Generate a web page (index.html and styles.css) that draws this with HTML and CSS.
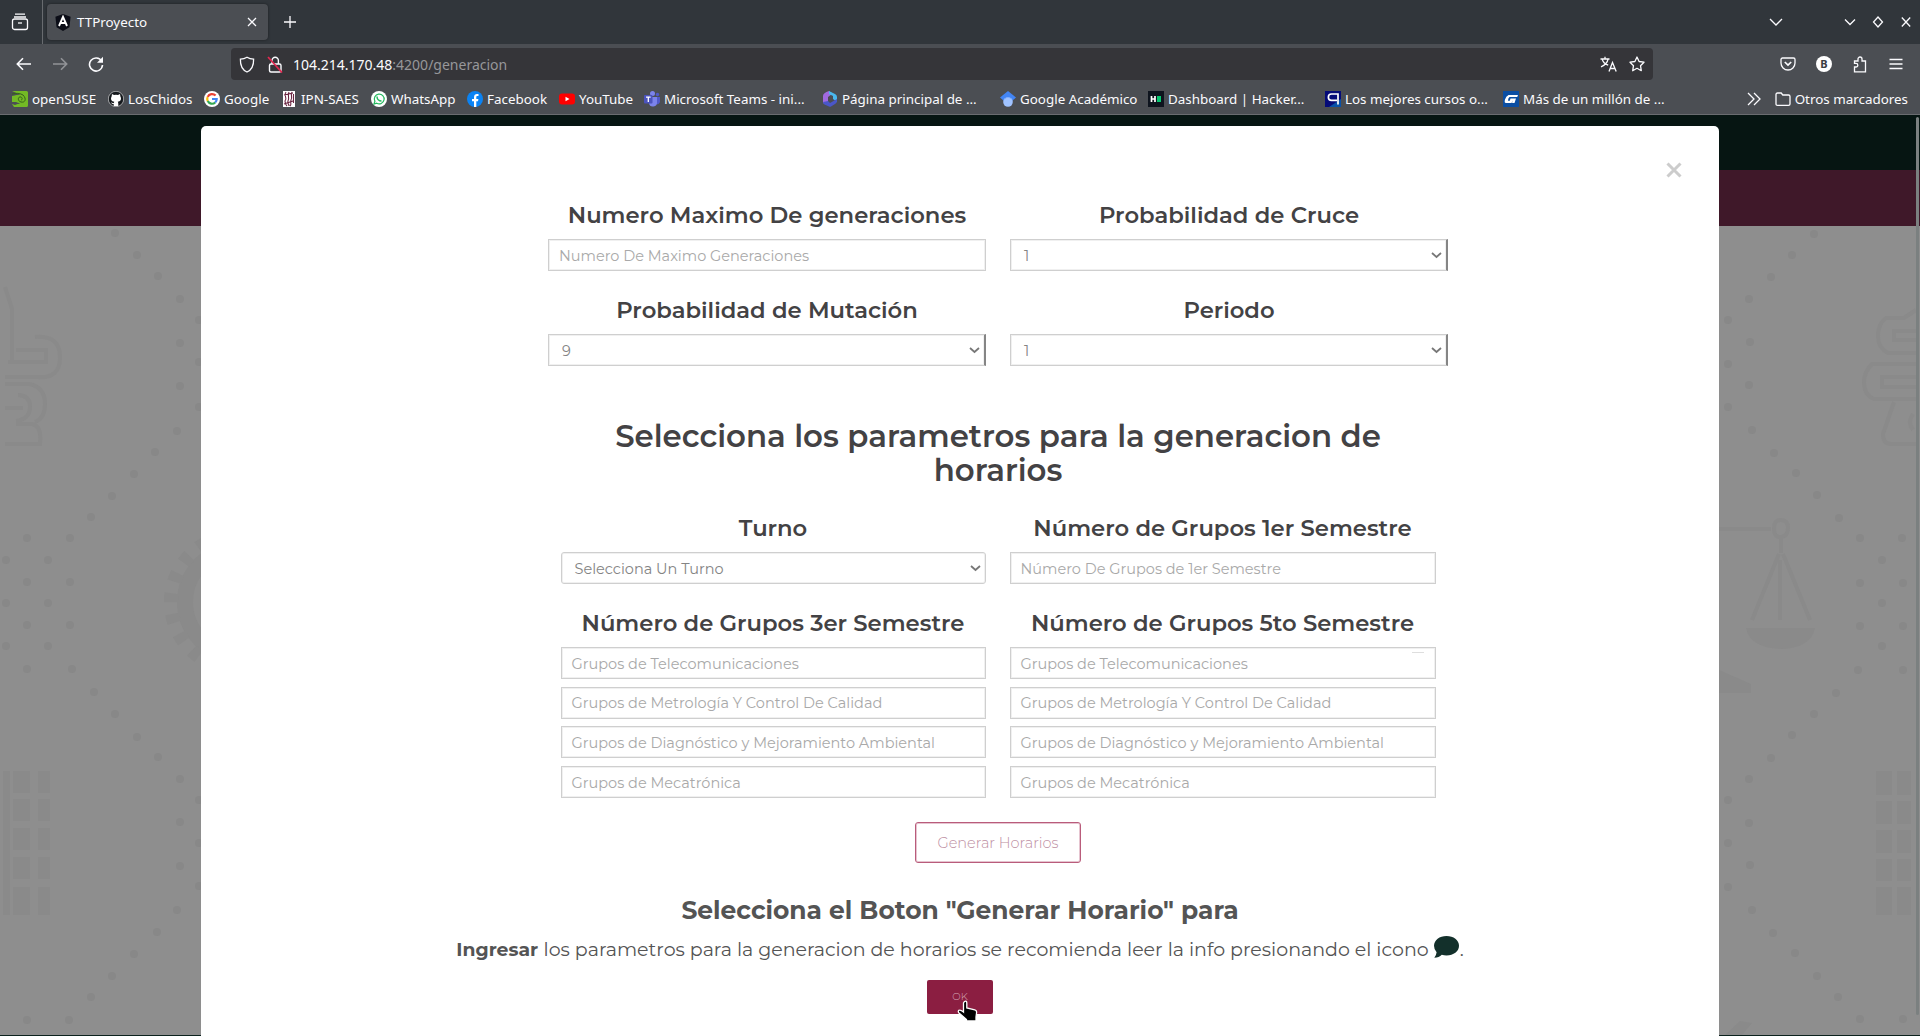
FILE: index.html
```html
<!DOCTYPE html>
<html lang="es">
<head>
<meta charset="utf-8">
<title>TTProyecto</title>
<link rel="stylesheet" href="styles.css">
</head>
<body>
<div class="window">
  <header class="tabs">
    <div class="tabs-view"><svg width="18" height="18" viewBox="0 0 18 18" class="line"><path d="M4 1.2h10M3 4h12"/><rect x="1.5" y="6" width="15" height="10.5" rx="2"/><path d="M7 10h4"/></svg></div>
    <div class="tab">
      <svg width="16" height="17" viewBox="0 0 16 17"><path fill="#0b0d17" d="M8 0l7.6 2.7-1.2 10.6L8 17l-6.4-3.7L.4 2.7z"/><path fill="none" stroke="#fff" stroke-width="1.9" d="M4 12L8 2.8 12 12M5.6 9h4.8"/></svg>
      <span class="tab-name">TTProyecto</span>
      <svg width="10" height="10" viewBox="0 0 10 10" class="line"><path d="M1 1l8 8M9 1l-8 8"/></svg>
    </div>
    <svg class="plus line" width="14" height="14" viewBox="0 0 14 14"><path d="M7 1v12M1 7h12"/></svg>
    <div class="tabs-right">
      <svg class="line list-tabs" width="14" height="10" viewBox="0 0 14 10"><path d="M1 2l6 6 6-6"/></svg>
      <svg class="line" width="12" height="10" viewBox="0 0 12 10"><path d="M1 2.5l5 5 5-5"/></svg>
      <svg class="line" width="12" height="12" viewBox="0 0 12 12"><path d="M6 1l4.500 5L6 11 1.500 6z"/></svg>
      <svg class="line" width="12" height="12" viewBox="0 0 12 12"><path d="M1.800 1.500l8.400 9M10.200 1.500l-8.400 9"/></svg>
    </div>
  </header>

  <nav class="toolbar">
    <div class="nav-buttons">
      <svg width="16" height="14" viewBox="0 0 16 14" class="bold-line"><path d="M15 7H1.500M7 1.200L1.300 7 7 12.800"/></svg>
      <svg width="16" height="14" viewBox="0 0 16 14" class="bold-line dim"><path d="M1 7h13.500M9 1.200L14.700 7 9 12.800"/></svg>
      <svg width="16" height="16" viewBox="0 0 16 16" class="bold-line"><path d="M13.600 5.200A6.500 6.500 0 1 0 14.500 9"/><path fill="#fbfbfe" stroke="none" d="M15 .8v6H9z"/></svg>
    </div>
    <div class="address">
      <svg width="16" height="17" viewBox="0 0 16 17" class="line"><path d="M8 1.200c2 1.300 4.200 1.900 6.600 2C14.800 9.500 12.300 14 8 16 3.700 14 1.200 9.500 1.400 3.200 3.800 3.100 6 2.500 8 1.200z"/></svg>
      <svg class="lock" width="16" height="17" viewBox="0 0 16 17"><g fill="none" stroke="#fbfbfe" stroke-width="1.400"><rect x="2.500" y="8" width="11.500" height="8" rx="1.500"/><path d="M5 8V4.500a3.200 3.200 0 0 1 6.400 0V8"/></g><path stroke="#e22850" stroke-width="1.700" d="M1 1l14 15.500"/></svg>
      <span class="url"><b>104.214.170.48</b>:4200/generacion</span>
      <svg class="translate line" width="17" height="16" viewBox="0 0 17 16"><path d="M.5 3h9M5 .8V3M2.200 3.200c.6 3 3 5 6 6M8 3.200C7.500 6.500 4.500 9.500 1 10.800M9 15.500l3.500-9 3.700 9M10.300 12.500h4.600"/></svg>
      <svg class="line" width="16" height="16" viewBox="0 0 16 16"><path stroke-linejoin="round" d="M8 1l2.100 4.500 4.900.7-3.500 3.500.8 5L8 12.300l-4.300 2.400.8-5L1 6.200l4.900-.7z"/></svg>
    </div>
    <div class="tool-icons">
      <svg width="16" height="14" viewBox="0 0 16 14" class="line"><path d="M2.500 1h11A1.500 1.500 0 0 1 15 2.500V6a7 7 0 0 1-14 0V2.500A1.500 1.500 0 0 1 2.500 1z"/><path stroke-width="1.700" d="M4.800 5L8 8l3.200-3"/></svg>
      <span class="badge-b">B</span>
      <svg width="16" height="17" viewBox="0 0 16 17" class="line"><path d="M2.500 15.800V11H4a1.800 1.800 0 0 0 0-3.600H2.500V5H6V3a2 2 0 0 1 4 0v2h3.500v10.800z"/></svg>
      <svg width="14" height="12" viewBox="0 0 14 12" class="line menu"><path d="M.5 1.500h13M.5 6h13M.5 10.500h13"/></svg>
    </div>
  </nav>

  <nav class="bookmarks">
    <div class="bm w96"><svg width="16" height="16" viewBox="0 0 16 16"><path fill="#73ba25" d="M0 0h14.500q1.500 0 1.500 1.500v13q0 1.500-1.500 1.500H2l-2-3h8L4 11 0 11V5q8-2 9-1z"/><path fill="none" stroke="#35631a" stroke-width="1" d="M0 3c4-1 8-1 11 1 4 4 2 8-2 7-4-1-3-6 0-5 2 1 1 3 0 3"/><path fill="#4b4e53" d="M0 11.500l8 .5-5 2-3-1z"/></svg><span>openSUSE</span></div>
    <div class="bm w96"><svg width="16" height="16" viewBox="0 0 16 16"><circle cx="8" cy="8" r="7.700" fill="#15191d" stroke="#eee" stroke-width=".6"/><path fill="#fff" d="M4 3l2 1q2-.5 4 0l2-1 .4 2.500c1.600 3-.2 5-2.700 5.300.6.600.6 1.200.6 4.200H5.700v-2c-1.700.2-2-.7-2.700-1.500 1 0 1.400 1 2.800.6l.5-1.300C3.500 10.300 2.200 8.500 3.600 5.500z"/></svg><span>LosChidos</span></div>
    <div class="bm w77"><svg width="16" height="16" viewBox="0 0 16 16"><circle cx="8" cy="8" r="8" fill="#fff"/><g fill="none" stroke-width="2.200"><path stroke="#ea4335" d="M11.600 4.600A4.800 4.800 0 0 0 3.700 5.900"/><path stroke="#fbbc05" d="M3.700 5.900a4.800 4.800 0 0 0 0 4.200"/><path stroke="#34a853" d="M3.700 10.100a4.800 4.800 0 0 0 7.500 1.400"/><path stroke="#4285f4" d="M11.200 11.500A4.800 4.800 0 0 0 12.700 8H8"/></g></svg><span>Google</span></div>
    <div class="bm w90"><svg width="16" height="16" viewBox="0 0 16 16"><path fill="#fff" d="M2 0h12v16H2z"/><path fill="none" stroke="#6b2541" stroke-width="1.100" d="M5 1c-3 4 2 5-1 9 0 3 1 4 2 5M8 1C6 5 9 6 7 10c-1 2 1 3 1 5M11 1c-2 4 1 5-1 8-1 3 1 4-1 6M12.500 3v9M3 4l9-2M3 13l9-3"/></svg><span>IPN-SAES</span></div>
    <div class="bm w96"><svg width="16" height="16" viewBox="0 0 16 16"><circle cx="8" cy="8" r="8" fill="#fff"/><path fill="none" stroke="#25b85f" stroke-width="1.200" d="M3 13l.9-2.700a4.900 4.900 0 1 1 1.800 1.900z"/><path fill="none" stroke="#25b85f" stroke-width="1.500" d="M6 5.500c0 2.500 2 4.500 4.500 4.500"/></svg><span>WhatsApp</span></div>
    <div class="bm w92"><svg width="16" height="16" viewBox="0 0 16 16"><circle cx="8" cy="8" r="8" fill="#0a83f4"/><path fill="#fff" d="M7 16v-5.700H5V8h2V6.300C7 4 8.300 3 10 3l1.500.1v2h-1C9.600 5.100 9.300 5.600 9.300 6.300V8h2.100l-.4 2.300H9.300V16z"/></svg><span>Facebook</span></div>
    <div class="bm w85"><svg width="16" height="16" viewBox="0 0 16 16"><rect y="2.500" width="16" height="11" rx="3" fill="#f00"/><path fill="#fff" d="M6.500 5.700v4.600L10.500 8z"/></svg><span>YouTube</span></div>
    <div class="bm w178"><svg width="16" height="16" viewBox="0 0 16 16"><circle cx="8.500" cy="2.500" r="2.500" fill="#7b83eb"/><circle cx="13.500" cy="3.500" r="1.700" fill="#5059c9"/><path fill="#5059c9" d="M11 6h5v5a3 3 0 0 1-4 2z"/><path fill="#7b83eb" d="M5 6h8v5a4 4 0 0 1-8 1z"/><rect y="4" width="8.500" height="8.500" rx="1" fill="#4b53bc"/><path stroke="#fff" stroke-width="1.300" d="M2 6.200h4.600M4.300 6.200v4.700"/></svg><span>Microsoft Teams - ini...</span></div>
    <div class="bm w178"><svg width="16" height="16" viewBox="0 0 16 16"><path fill="#a06ae0" d="M7 0Q1 2 1 5v7l5 2V6l4-3z"/><path fill="#49b8ee" d="M7 0l6 3q2 1 2 3v5l-4-3V5L7 3z"/><path fill="#4a56c8" d="M1 11l5-1 2 2 7-4v2q0 2-2 3l-4 2.500q-1 .5-2 0L2.500 13.500Q1 12.500 1 11z"/></svg><span>Página principal de ...</span></div>
    <div class="bm w148"><svg width="16" height="16" viewBox="0 0 16 16"><path fill="#4285f4" d="M8 0l8 6.500-4 3.500H4L0 6.500z"/><circle cx="8" cy="11" r="4.800" fill="#a0c3ff"/><path fill="#76a7fa" d="M3.700 9a4.800 4.800 0 0 1 8.600 0L8 6z"/></svg><span>Google Académico</span></div>
    <div class="bm w177"><svg width="16" height="16" viewBox="0 0 16 16"><path fill="#0e141e" d="M0 0h16v16H0z"/><path stroke="#fff" stroke-width="1.700" d="M3.500 5v6M7 5v6M3.500 8H7"/><path fill="#05c770" d="M9 5h4v6H9z"/></svg><span>Dashboard | Hacker...</span></div>
    <div class="bm w178"><svg width="16" height="16" viewBox="0 0 16 16"><path fill="#050b78" d="M0 0h16v16H0z"/><path fill="#0751a8" d="M16 8v8H4z"/><path fill="none" stroke="#fff" stroke-width="1.700" d="M13 13.500V3H6.500a3 3 0 0 0 0 6.300H12"/></svg><span>Los mejores cursos o...</span></div>
    <div class="bm"><svg width="16" height="16" viewBox="0 0 16 16"><path fill="#0b4ea2" d="M0 0h16v16H0z"/><path fill="#fff" d="M5.500 4H15l-.8 2H6.500Q5 7 5 9.800h1.800L7.500 7.500H13L11.500 12H9l.8-2.600L8.500 12H3Q1 12 2 8.500T5.500 4z"/></svg><span>Más de un millón de ...</span></div>
    <div class="bm others"><svg class="line more" width="14" height="14" viewBox="0 0 14 14"><path d="M1 1l6 6-6 6M7 1l6 6-6 6"/></svg><svg class="line" width="16" height="16" viewBox="0 0 16 16"><path d="M1 13V3.500Q1 2 2.500 2h3.700l1.600 2h5.700Q15 4 15 5.500V13q0 1.300-1.500 1.300h-11Q1 14.300 1 13z"/></svg><span>Otros marcadores</span></div>
  </nav>

  <main class="page">
    <div class="backdrop">
      <div class="band-green"></div>
      <div class="band-wine"></div>
      <svg class="pattern" width="1920" height="809" viewBox="0 226 1920 809">
        <g class="dots"><path d="M115 233h0M137 255h0M158 276h0M180 299h0M199 320h0M180 343h0M199 362h0M180 386h0M199 407h0M177 431h0M155 452h0M134 474h0M112 496h0M91 517h0M27 538h0M70 538h0M6 560h0M48 560h0M27 582h0M70 582h0M6 603h0M48 603h0M27 625h0M70 625h0M6 646h0M48 646h0M27 669h0M72 669h0M94 692h0M115 714h0M137 737h0M158 757h0M180 779h0M199 800h0M180 822h0M199 843h0M180 866h0M199 886h0M177 910h0M157 932h0M134 954h0M112 976h0M91 997h0M27 1020h0M69 1020h0"/><path d="M1814 234h0M1792 255h0M1771 277h0M1749 299h0M1728 320h0M1750 342h0M1728 364h0M1749 385h0M1728 407h0M1752 430h0M1774 453h0M1796 473h0M1817 495h0M1839 518h0M1860 538h0M1902 538h0M1882 560h0M1860 583h0M1903 583h0M1882 603h0M1860 626h0M1903 626h0M1882 646h0M1858 670h0M1903 670h0M1836 693h0M1814 714h0M1792 735h0M1771 758h0M1749 779h0M1728 800h0M1749 823h0M1728 843h0M1750 865h0M1728 887h0M1752 910h0M1773 933h0M1795 953h0M1817 976h0M1838 997h0M1860 1019h0M1903 1019h0"/></g>
        <g class="faint-fill"><path d="M3 771h7v144H3zM13 771h17v22H13zM13 799h17v22H13zM13 828h17v22H13zM13 857h17v22H13zM13 887h17v28H13zM38 771h12v22H38zM38 799h12v22H38zM38 828h12v22H38zM38 857h12v22H38zM38 887h12v28H38z"/><path d="M1876 771h16v24h-16zM1876 801h16v23h-16zM1876 830h16v23h-16zM1876 859h16v22h-16zM1876 887h16v28h-16zM1897 771h14v24h-14zM1897 801h14v23h-14zM1897 830h14v23h-14zM1897 859h14v22h-14zM1897 887h14v28h-14z"/><path d="M1746 628h69q-4 20-34 21-31-1-35-21zM1719 670l32 14v9h-32zM1725 1035l15-14 12 2-10 12z"/></g>
        <g class="gear"><circle cx="238" cy="602" r="53"/><circle cx="238" cy="602" r="67" class="teeth"/></g>
        <g class="faint-line"><path d="M5 287l7 22v52M35 337q25-2 25 20t-22 20H5M16 350h30v12H8M5 384h24q16 3 16 20 0 14-10 18M18 395q12 0 12 12t-14 14M5 408h18M16 424h16q10 2 8 20H5"/><path d="M1916 310l-12 8h-18q-8 6-8 18t10 17h28M1916 331h-22v9h22M1916 364h-44q-8 8-8 18 0 13 10 17h42M1916 377h-34v10h34M1894 402l-11 32q0 10 8 10h25M1913 414q-6 8 0 16"/><path d="M1719 529h52M1774 528q0-8 7-8t7 8-7 9-7-9M1781 537v16M1779 554l-27 66M1783 554l27 66M1780 560v60"/></g>
      </svg>
      <div class="band-foot"></div>
    </div>

    <section class="modal">
      <svg class="close" width="16" height="16" viewBox="0 0 16 16"><path d="M1.500 1.500l13 13M14.500 1.500l-13 13"/></svg>
      <div class="form">
        <div class="grid">
          <div class="group"><label class="label">Numero Maximo De generaciones</label><div class="field placeholder"><span>Numero De Maximo Generaciones</span></div></div>
          <div class="group"><label class="label">Probabilidad de Cruce</label><div class="field select edge"><span>1</span><svg class="arrow" width="11" height="7" viewBox="0 0 11 7"><path d="M1 1l4.500 4L10 1"/></svg></div></div>
          <div class="group"><label class="label">Probabilidad de Mutación</label><div class="field select edge"><span>9</span><svg class="arrow" width="11" height="7" viewBox="0 0 11 7"><path d="M1 1l4.500 4L10 1"/></svg></div></div>
          <div class="group"><label class="label">Periodo</label><div class="field select edge"><span>1</span><svg class="arrow" width="11" height="7" viewBox="0 0 11 7"><path d="M1 1l4.500 4L10 1"/></svg></div></div>
        </div>
        <h2 class="heading">Selecciona los parametros para la generacion de<br>horarios</h2>
        <div class="grid narrow">
          <div class="group"><label class="label">Turno</label><div class="field select rounded"><span>Selecciona Un Turno</span><svg class="arrow" width="11" height="7" viewBox="0 0 11 7"><path d="M1 1l4.500 4L10 1"/></svg></div></div>
          <div class="group"><label class="label">Número de Grupos 1er Semestre</label><div class="field placeholder"><span>Número De Grupos de 1er Semestre</span></div></div>
          <div class="group"><label class="label">Número de Grupos 3er Semestre</label>
            <div class="field placeholder"><span>Grupos de Telecomunicaciones</span></div>
            <div class="field placeholder"><span>Grupos de Metrología Y Control De Calidad</span></div>
            <div class="field placeholder"><span>Grupos de Diagnóstico y Mejoramiento Ambiental</span></div>
            <div class="field placeholder"><span>Grupos de Mecatrónica</span></div>
          </div>
          <div class="group"><label class="label">Número de Grupos 5to Semestre</label>
            <div class="field placeholder"><span>Grupos de Telecomunicaciones</span><i class="dash"></i></div>
            <div class="field placeholder"><span>Grupos de Metrología Y Control De Calidad</span></div>
            <div class="field placeholder"><span>Grupos de Diagnóstico y Mejoramiento Ambiental</span></div>
            <div class="field placeholder"><span>Grupos de Mecatrónica</span></div>
          </div>
        </div>
        <button class="generate">Generar Horarios</button>
      </div>
      <h3 class="title">Selecciona el Boton "Generar Horario" para</h3>
      <p class="hint"><b>Ingresar</b> <span>los parametros para la generacion de horarios se recomienda leer la info presionando el icono</span><svg class="bubble" width="25" height="22" viewBox="0 0 25 22"><path d="M12.500 0C19.500 0 25 4.200 25 9.800s-5.500 9.700-12.500 9.700q-2.500 0-4.700-.7Q5 21.800.3 21.800q2-2.300 2.300-5.500Q0 13.500 0 9.800C0 4.200 5.500 0 12.500 0z"/></svg>.</p>
      <button class="ok">OK<svg class="pointer" width="21" height="22" viewBox="0 0 21 22"><path d="M7.500 1.500Q9.800.5 9.800 3v5l8 1.800q2 .5 1.800 2.700L19 17v4h-9.500v-1.500L2 13q-1.500-2 .2-2.800 1.300-.7 4.300 1.800V3z"/></svg></button>
    </section>
    <div class="scrollbar"></div>
  </main>
</div>
</body>
</html>
```
FILE: styles.css
```css
* { box-sizing: border-box; }
body { margin: 0; font-family: "Noto Sans", sans-serif; font-size: 13.4px; color: #fbfbfe; }
svg { display: block; flex: none; }
.window { width: 1920px; height: 1036px; overflow: hidden; display: flex; flex-direction: column; }
.line { fill: none; stroke: #fbfbfe; stroke-width: 1.3; }
.bold-line { fill: none; stroke: #fbfbfe; stroke-width: 1.6; }
.dim { opacity: .4; }

.tabs { height: 44px; flex: none; background: #31363b; display: flex; align-items: center; }
.tabs-view { width: 43px; height: 44px; border-right: 1px solid #686b6f; display: flex; align-items: center; padding-left: 11px; }
.tab { width: 221px; height: 36px; margin-left: 4px; padding: 0 11px 0 8px; border-radius: 4px; background: #4b4e53; box-shadow: 0 0 3px rgba(0, 0, 0, .45); display: flex; align-items: center; }
.tab-name { flex: 1; margin-left: 6px; }
.plus { margin-left: 15px; }
.tabs-right { margin-left: auto; margin-right: 8px; display: flex; align-items: center; gap: 16px; }
.list-tabs { margin-right: 45px; }

.toolbar { height: 40px; flex: none; background: #4b4e53; display: flex; align-items: center; }
.nav-buttons { width: 231px; padding-left: 16px; display: flex; align-items: center; gap: 20px; }
.address { width: 1422px; height: 32px; padding: 0 8px; background: #353539; border-radius: 4px; display: flex; align-items: center; }
.lock { margin-left: 12px; }
.url { margin-left: 10px; font-size: 14px; color: #97979a; }
.url b { font-weight: 400; color: #fbfbfe; }
.translate { margin-left: auto; margin-right: 12px; }
.tool-icons { margin-left: auto; margin-right: 17px; display: flex; align-items: center; gap: 20px; }
.menu { margin-left: 1px; }
.badge-b { width: 16px; height: 16px; border-radius: 50%; background: #fff; color: #3b3d42; font-size: 11px; font-weight: 700; line-height: 16px; text-align: center; }

.bookmarks { height: 31px; flex: none; background: #4b4e53; border-bottom: 1px solid #6a6c70; padding: 0 12px 1px 12px; display: flex; align-items: center; }
.bm { display: flex; align-items: center; gap: 4px; white-space: nowrap; }
.w77 { width: 77px; } .w85 { width: 85px; } .w90 { width: 90px; } .w92 { width: 92px; } .w96 { width: 96px; }
.w148 { width: 148px; } .w177 { width: 177px; } .w178 { width: 178px; }
.others { margin-left: auto; }
.more { margin-right: 10px; }

.page { flex: 1; min-height: 0; display: grid; grid-template: 921px / 1920px; overflow: hidden; position: relative; }
.backdrop, .modal { grid-area: 1 / 1; }
.backdrop { background: #8e8e8e; }
.band-green { height: 55px; background: #061512; }
.band-wine { height: 56px; background: #3f1829; }
.band-foot { height: 1px; background: #0b211d; }
.pattern { background: #8e8e8e; }
.dots { fill: none; stroke: #888888; stroke-width: 8; stroke-linecap: round; }
.faint-fill { fill: #8a8a8a; }
.faint-line { fill: none; stroke: #8a8a8a; stroke-width: 4; }
.gear { fill: none; stroke: #8a8a8a; stroke-width: 16; }
.teeth { stroke-width: 14; stroke-dasharray: 9 12; }
.scrollbar { position: absolute; right: 1px; top: 2px; width: 3px; height: 898px; border-radius: 2px; background: #7b8080; }

.modal { position: relative; width: 1518px; height: 930px; margin: 11px 0 0 201px; background: #fff; border-radius: 5px 5px 0 0; font-family: Montserrat, Inter, sans-serif; color: #545454; display: flex; flex-direction: column; align-items: center; padding-top: 73px; }
.close { position: absolute; right: 37px; top: 36px; stroke: #ccc; stroke-width: 3; fill: none; }
.form { width: 900px; align-self: flex-start; margin-left: 347px; display: flex; flex-direction: column; align-items: center; color: #434244; }
.grid { display: grid; grid-template-columns: 438px 438px; gap: 23px 24px; }
.narrow { grid-template-columns: 425px 426px; margin-top: 25px; }
.group { display: flex; flex-direction: column; }
.label { height: 32px; margin-bottom: 8px; line-height: 33px; font-size: 22.7px; font-weight: 600; text-align: center; white-space: nowrap; }
.field { position: relative; height: 32px; border: 1px solid #cfcfcf; box-shadow: inset 0 0 0 1px #f0f0f0; padding: 1px 6px 0 10px; font-size: 14.5px; display: flex; align-items: center; justify-content: space-between; white-space: nowrap; color: #848484; }
.field + .field { margin-top: 7.7px; }
.placeholder { color: #a9a9a9; }
.select { padding-left: 13px; padding-right: 4px; }
.edge { border-right: 2px solid #858585; }
.rounded { border-radius: 3px; }
.arrow { fill: none; stroke: #777; stroke-width: 1.8; }
.dash { position: absolute; right: 11px; top: 4px; width: 12px; height: 1px; background: #dedede; }
.heading { margin: 53px 0 0; font-size: 30.8px; line-height: 34px; font-weight: 600; text-align: center; white-space: nowrap; }
.generate { width: 166px; height: 41px; margin-top: 24px; padding: 0; border: 1.500px solid #b95c7b; box-shadow: inset 0 0 0 1px #e6c4d0; border-radius: 3px; background: #fff; color: #bd8ea2; font: 300 14.5px/38px Montserrat, Inter, sans-serif; white-space: nowrap; }
.title { margin: 31px 0 0; font-size: 24.95px; line-height: 32px; font-weight: 700; white-space: nowrap; }
.hint { margin: 9px 0 0; font-size: 19px; line-height: 29px; white-space: nowrap; display: flex; }
.hint b { font-size: 18.8px; font-weight: 700; margin-right: 5.500px; }
.bubble { margin: 1px 1px 0 5px; fill: #13302b; }
.ok { position: relative; width: 66px; height: 34px; margin-top: 16px; padding: 0; border: 0; border-radius: 2px; background: #8b1e41; color: #d5a8b6; font: 300 10px/34px Montserrat, Inter, sans-serif; }
.pointer { position: absolute; left: 30px; top: 20px; fill: #000; stroke: #fff; stroke-width: 1.3; }
```
